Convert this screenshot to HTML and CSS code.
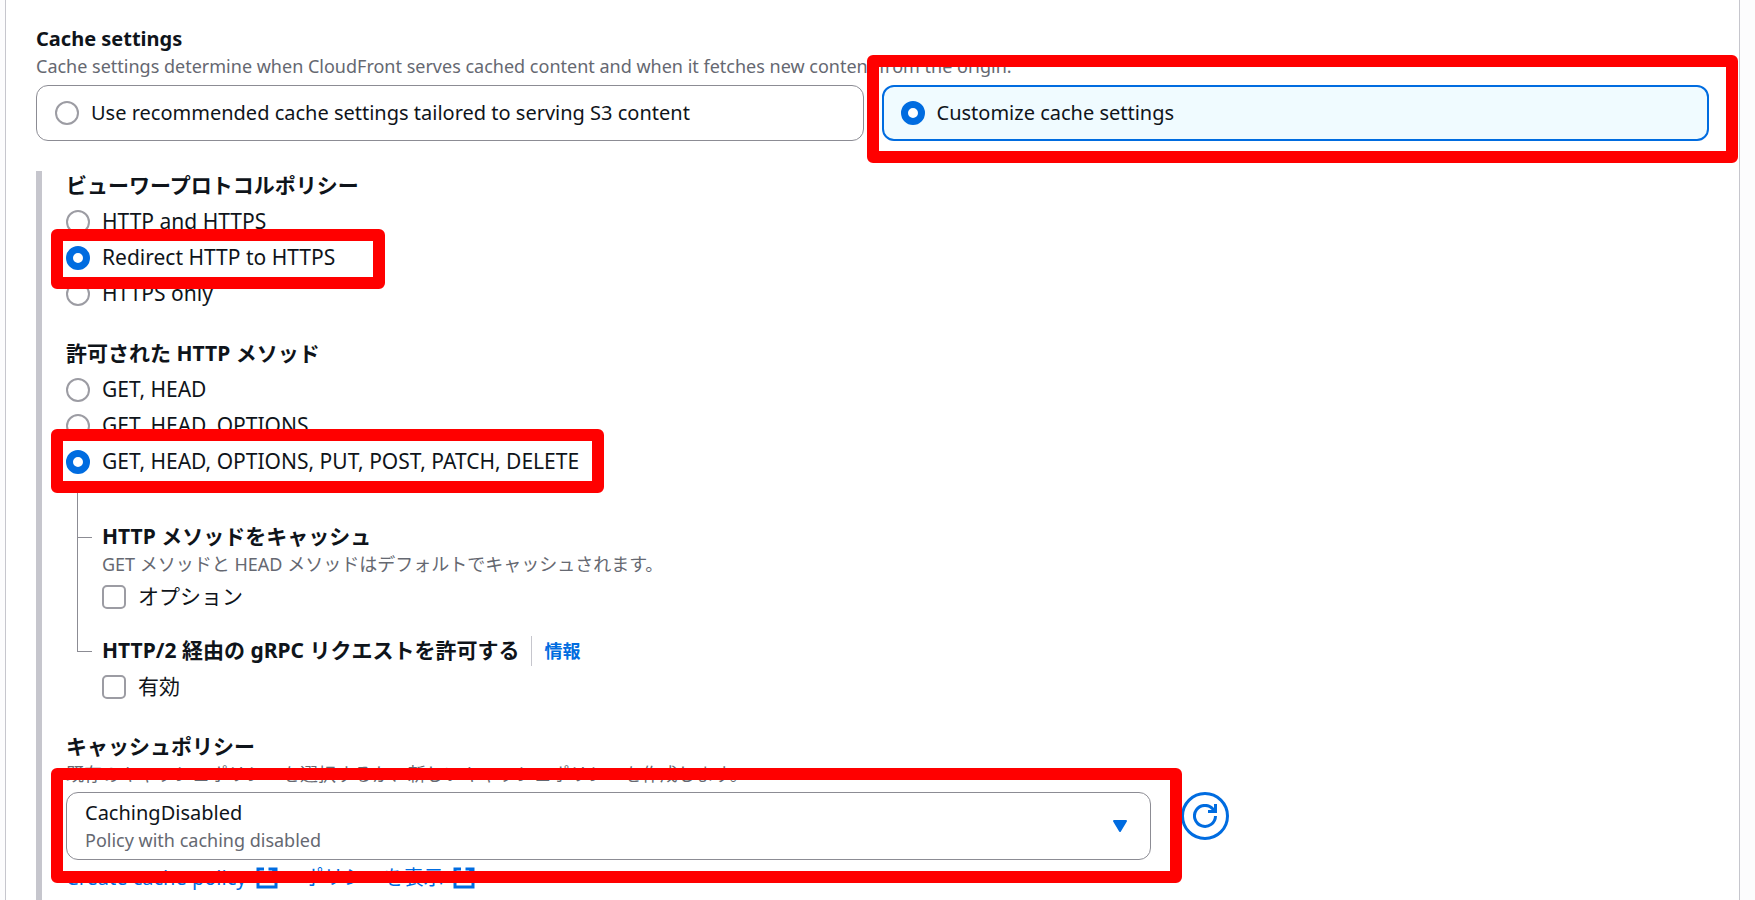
FILE: index.html
```html
<!DOCTYPE html>
<html lang="ja">
<head>
    <meta charset="UTF-8">
    <meta name="viewport" content="width=device-width, initial-scale=1">
    <title>Cache settings</title>
    <link rel="stylesheet" href="styles.css">
</head>
<body>
    <main class="panel">
        <!-- Cache settings -->
        <section>
            <h2 id="cacheSettings">Cache settings</h2>
            <p class="hint">Cache settings determine when CloudFront serves cached content and when it fetches new content from the origin.</p>
            <div class="tiles" role="radiogroup" aria-labelledby="cacheSettings">
                <label class="tile">
                    <input type="radio" name="cache">
                    <span>Use recommended cache settings tailored to serving S3 content</span>
                </label>
                <label class="tile selected marked">
                    <input type="radio" name="cache" checked>
                    <span>Customize cache settings</span>
                    <span class="mark mark-tile"></span>
                </label>
            </div>
        </section>

        <div class="custom">
            <!-- Viewer protocol policy -->
            <section class="options" role="radiogroup" aria-labelledby="protocol">
                <h3 id="protocol">ビューワープロトコルポリシー</h3>
                <label class="option">
                    <input type="radio" name="protocol">
                    <span class="text">HTTP and HTTPS</span>
                </label>
                <label class="option marked">
                    <input type="radio" name="protocol" checked>
                    <span class="text">Redirect HTTP to HTTPS</span>
                    <span class="mark mark-protocol"></span>
                </label>
                <label class="option">
                    <input type="radio" name="protocol">
                    <span class="text">HTTPS only</span>
                </label>
            </section>

            <!-- Allowed HTTP methods -->
            <section class="options" role="radiogroup" aria-labelledby="methods">
                <h3 id="methods">許可された HTTP メソッド</h3>
                <label class="option">
                    <input type="radio" name="methods">
                    <span class="text">GET, HEAD</span>
                </label>
                <label class="option">
                    <input type="radio" name="methods">
                    <span class="text">GET, HEAD, OPTIONS</span>
                </label>
                <label class="option marked">
                    <input type="radio" name="methods" checked>
                    <span class="text">GET, HEAD, OPTIONS, PUT, POST, PATCH, DELETE</span>
                    <span class="mark mark-methods"></span>
                </label>
            </section>

            <div class="tree">
                <div class="branch">
                    <div class="line"></div>
                    <div>
                        <h3>HTTP メソッドをキャッシュ</h3>
                        <p class="hint">GET メソッドと HEAD メソッドはデフォルトでキャッシュされます。</p>
                        <label class="option">
                            <input type="checkbox">
                            <span class="text">オプション</span>
                        </label>
                    </div>
                </div>
                <div class="branch last">
                    <div class="line"></div>
                    <div>
                        <div class="heading">
                            <h3>HTTP/2 経由の gRPC リクエストを許可する</h3>
                            <a class="info" href="#">情報</a>
                        </div>
                        <label class="option">
                            <input type="checkbox">
                            <span class="text">有効</span>
                        </label>
                    </div>
                </div>
            </div>

            <!-- Cache policy -->
            <section class="policy">
                <h3><label for="cachePolicy">キャッシュポリシー</label></h3>
                <p class="hint">既存のキャッシュポリシーを選択するか、新しいキャッシュポリシーを作成します。</p>
                <div class="policy-row">
                    <div class="dropdown marked">
                        <select id="cachePolicy">
                            <option>CachingDisabled</option>
                        </select>
                        <span class="hint dropdown-hint">Policy with caching disabled</span>
                        <svg class="caret" viewBox="0 0 16 13" aria-hidden="true">
                            <path d="M2 1h12L8 11z" fill="currentColor" stroke="currentColor" stroke-width="2" stroke-linejoin="round"/>
                        </svg>
                        <span class="mark mark-policy"></span>
                    </div>
                    <button class="refresh" type="button" aria-label="Refresh">
                        <svg viewBox="0 0 16 16" aria-hidden="true">
                            <path d="M15 8a7 7 0 1 1-1.5-4.4L15 5M15 0v5h-5" fill="none" stroke="currentColor" stroke-width="2"/>
                        </svg>
                    </button>
                </div>
                <div class="links">
                    <a href="#">Create cache policy
                        <svg viewBox="0 0 16 16" aria-hidden="true">
                            <path d="M6 2H2v12h12v-4M9 2h5v5M14 2L7 9" fill="none" stroke="currentColor" stroke-width="2"/>
                        </svg>
                    </a>
                    <a href="#">ポリシーを表示
                        <svg viewBox="0 0 16 16" aria-hidden="true">
                            <path d="M6 2H2v12h12v-4M9 2h5v5M14 2L7 9" fill="none" stroke="currentColor" stroke-width="2"/>
                        </svg>
                    </a>
                </div>
            </section>
        </div>
    </main>
</body>
</html>
```

FILE: styles.css
```css
* { box-sizing: border-box; }
body {
    margin: 0;
    background: #fcfcfd;
    color: #0f141a;
    font-family: "Noto Sans", "Noto Sans CJK JP", sans-serif;
    font-size: 21px;
    line-height: 30px;
    height: 100vh;
    overflow: hidden;
}
h2, h3, p { margin: 0; }
h2 { font-size: 20px; line-height: 30px; }
h3 {
    padding-bottom: 2px;
    font-size: 21px;
    line-height: 28px;
}
a { color: #006ce0; text-decoration: none; }
.panel {
    display: flex;
    flex-direction: column;
    height: 100vh;
    margin: 0 15px 0 5px;
    padding: 24px 30px 0;
    background: #fff;
    border: 1px solid #c6c6cd;
    border-width: 0 1px;
}
.hint { color: #656871; font-size: 18px; line-height: 24px; }

/* Radios and checkboxes */
input {
    appearance: none;
    flex: none;
    width: 24px;
    height: 24px;
    margin: 0;
    background: #fff;
    border: 2px solid #9c9ca3;
}
input[type="radio"] { border-radius: 50%; }
input[type="radio"]:checked { border: 7px solid #006ce0; }
input[type="checkbox"] { border-radius: 5px; }
.text {
    padding-bottom: 2px;
    line-height: 28px;
}

.tiles {
    display: grid;
    grid-template-columns: 1fr 1fr;
    gap: 18px;
    margin-top: 7px;
}
.tile {
    display: flex;
    align-items: center;
    gap: 12px;
    height: 56px;
    padding: 0 18px;
    border: 1px solid #8c8c94;
    border-radius: 12px;
    font-size: 20px;
}
.tile.selected {
    padding: 0 17px;
    background: #f0fbff;
    border: 2px solid #006ce0;
}

.custom {
    flex: 1;
    margin-top: 30px;
    padding-left: 24px;
    border-left: 6px solid #c6c6cd;
}
.options {
    display: flex;
    flex-direction: column;
    gap: 6px;
}
.options + .options, .policy { margin-top: 30px; }
.option {
    display: flex;
    align-items: center;
    gap: 12px;
}

/* Connected sub options */
.tree {
    padding: 12px 0 0 11px;
}
.branch {
    display: grid;
    grid-template-columns: 15px 1fr;
    column-gap: 10px;
    padding-top: 33px;
    background: linear-gradient(#8c8c94, #8c8c94) left top / 1px 100% no-repeat;
}
.branch.last {
    padding-top: 24px;
    background-size: 1px 39px;
}
.line {
    height: 16px;
    border-bottom: 1px solid #8c8c94;
}
.branch .option { margin-top: 6px; }
.heading { display: flex; }
.info {
    margin-left: 12px;
    padding-left: 12px;
    border-left: 1px solid #c6c6cd;
    font-size: 18px;
    font-weight: 700;
}

.policy-row {
    display: grid;
    grid-template-columns: repeat(3, 1fr);
    gap: 30px;
    margin-top: 6px;
}
.dropdown {
    grid-column: span 2;
    display: grid;
    grid-template-columns: 1fr auto;
    border: 1px solid #8c8c94;
    border-radius: 12px;
}
select {
    grid-area: 1 / 1 / 2 / 3;
    appearance: none;
    height: 66px;
    padding: 5px 18px 31px;
    border: none;
    border-radius: 12px;
    background: none;
    color: inherit;
    font: inherit;
    font-size: 20px;
}
.dropdown-hint {
    grid-area: 1 / 1;
    align-self: end;
    padding: 0 18px 7px;
    pointer-events: none;
}
.caret {
    grid-area: 1 / 2;
    align-self: center;
    width: 16px;
    margin-right: 22px;
    color: #006ce0;
    pointer-events: none;
}
.refresh {
    display: grid;
    place-items: center;
    width: 48px;
    height: 48px;
    padding: 0;
    border: 3px solid #006ce0;
    border-radius: 50%;
    background: #fff;
    color: #006ce0;
}
.refresh svg { width: 24px; height: 24px; }
.links {
    display: flex;
    gap: 24px;
    margin-top: 3px;
    font-size: 20px;
}
.links a {
    display: flex;
    align-items: center;
    gap: 9px;
}
.links svg { width: 24px; height: 24px; }

/* Red highlight frames */
.marked { position: relative; }
.mark {
    position: absolute;
    z-index: 1;
    border: 12px solid #f00;
    border-radius: 6px;
    pointer-events: none;
}
.mark-tile { inset: -32px -31px -24px -17px; }
.mark-protocol { inset: -14px auto -16px -15px; width: 334px; }
.mark-methods { inset: -18px auto -16px -15px; width: 553px; }
.mark-policy { inset: -25px -32px -24px -16px; }
```
